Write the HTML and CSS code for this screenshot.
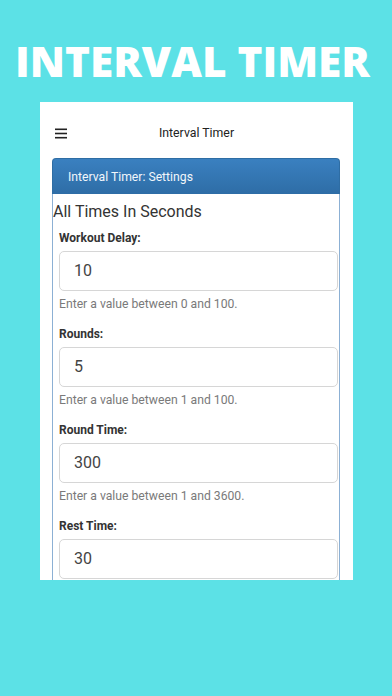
FILE: index.html
```html
<!DOCTYPE html>
<html lang="en">
<head>
<meta charset="utf-8">
<title>Interval Timer</title>
<link rel="stylesheet" href="styles.css">
</head>
<body>
<h1 class="hero">INTERVAL TIMER</h1>
<div class="phone">
  <div class="navbar">
    <svg class="menu" width="12" height="11" viewBox="0 0 12 11" aria-hidden="true">
      <rect x="0" y="0.5" width="12" height="1.6" fill="#222"/>
      <rect x="0" y="4.7" width="12" height="1.6" fill="#222"/>
      <rect x="0" y="8.9" width="12" height="1.6" fill="#222"/>
    </svg>
    <div class="nav-title">Interval Timer</div>
    <div class="nav-spacer"></div>
  </div>
  <div class="panel">
    <div class="panel-heading">Interval Timer: Settings</div>
    <div class="panel-body">
      <h3 class="section-title">All Times In Seconds</h3>
      <div class="form">
        <div class="group">
          <label class="label">Workout Delay:</label>
          <div class="input">10</div>
          <div class="help">Enter a value between 0 and 100.</div>
        </div>
        <div class="group">
          <label class="label">Rounds:</label>
          <div class="input">5</div>
          <div class="help">Enter a value between 1 and 100.</div>
        </div>
        <div class="group">
          <label class="label">Round Time:</label>
          <div class="input">300</div>
          <div class="help">Enter a value between 1 and 3600.</div>
        </div>
        <div class="group">
          <label class="label">Rest Time:</label>
          <div class="input">30</div>
        </div>
      </div>
    </div>
  </div>
</div>
</body>
</html>
```

FILE: styles.css
```css
html, body {
  margin: 0;
  padding: 0;
}
body {
  background: #5ce1e6;
  height: 696px;
  overflow: hidden;
  font-family: Roboto, "Liberation Sans", sans-serif;
}
.hero {
  margin: 0;
  padding: 32px 7px 0 0;
  font-family: "Open Sans", "Liberation Sans", sans-serif;
  font-weight: 800;
  font-size: 42.3px;
  line-height: 58px;
  color: #ffffff;
  text-align: center;
  letter-spacing: 0;
}
.phone {
  margin: 12px 0 0 40px;
  width: 313px;
  height: 478px;
  background: #ffffff;
  overflow: hidden;
}
.navbar {
  display: flex;
  align-items: center;
  height: 50px;
  padding: 6px 15px 0 15px;
}
.menu {
  width: 12px;
  flex: none;
}
.nav-title {
  flex: 1;
  text-align: center;
  font-size: 12.3px;
  color: #222;
}
.nav-spacer {
  width: 12px;
  flex: none;
}
.panel {
  margin: 0 13px 0 12px;
}
.panel-heading {
  height: 36px;
  box-sizing: border-box;
  padding-left: 15px;
  display: flex;
  align-items: center;
  color: #f2f6fb;
  font-size: 12.2px;
  background: linear-gradient(#3a80c0, #2e6da6);
  border-radius: 4px 4px 0 0;
  border: 1px solid #2e6da4;
  border-bottom: none;
}
.panel-body {
  border-left: 1px solid #8cb0d4;
  border-right: 1px solid #8cb0d4;
  height: 400px;
}
.section-title {
  margin: 0;
  padding-top: 7.5px;
  font-size: 16px;
  line-height: 20px;
  font-weight: 400;
  color: #333;
}
.form {
  padding: 8px 1px 0 6px;
}
.group {
  display: flex;
  flex-direction: column;
  margin-bottom: 14px;
}
.label {
  font-size: 12px;
  line-height: 16px;
  font-weight: 700;
  color: #333;
}
.input {
  margin-top: 5px;
  height: 40px;
  box-sizing: border-box;
  border: 1px solid #d6d6d6;
  border-radius: 5px;
  padding-left: 14px;
  display: flex;
  align-items: center;
  font-size: 16px;
  color: #444;
}
.help {
  margin-top: 5px;
  font-size: 12.2px;
  line-height: 16px;
  color: #7a7a7a;
}
```
